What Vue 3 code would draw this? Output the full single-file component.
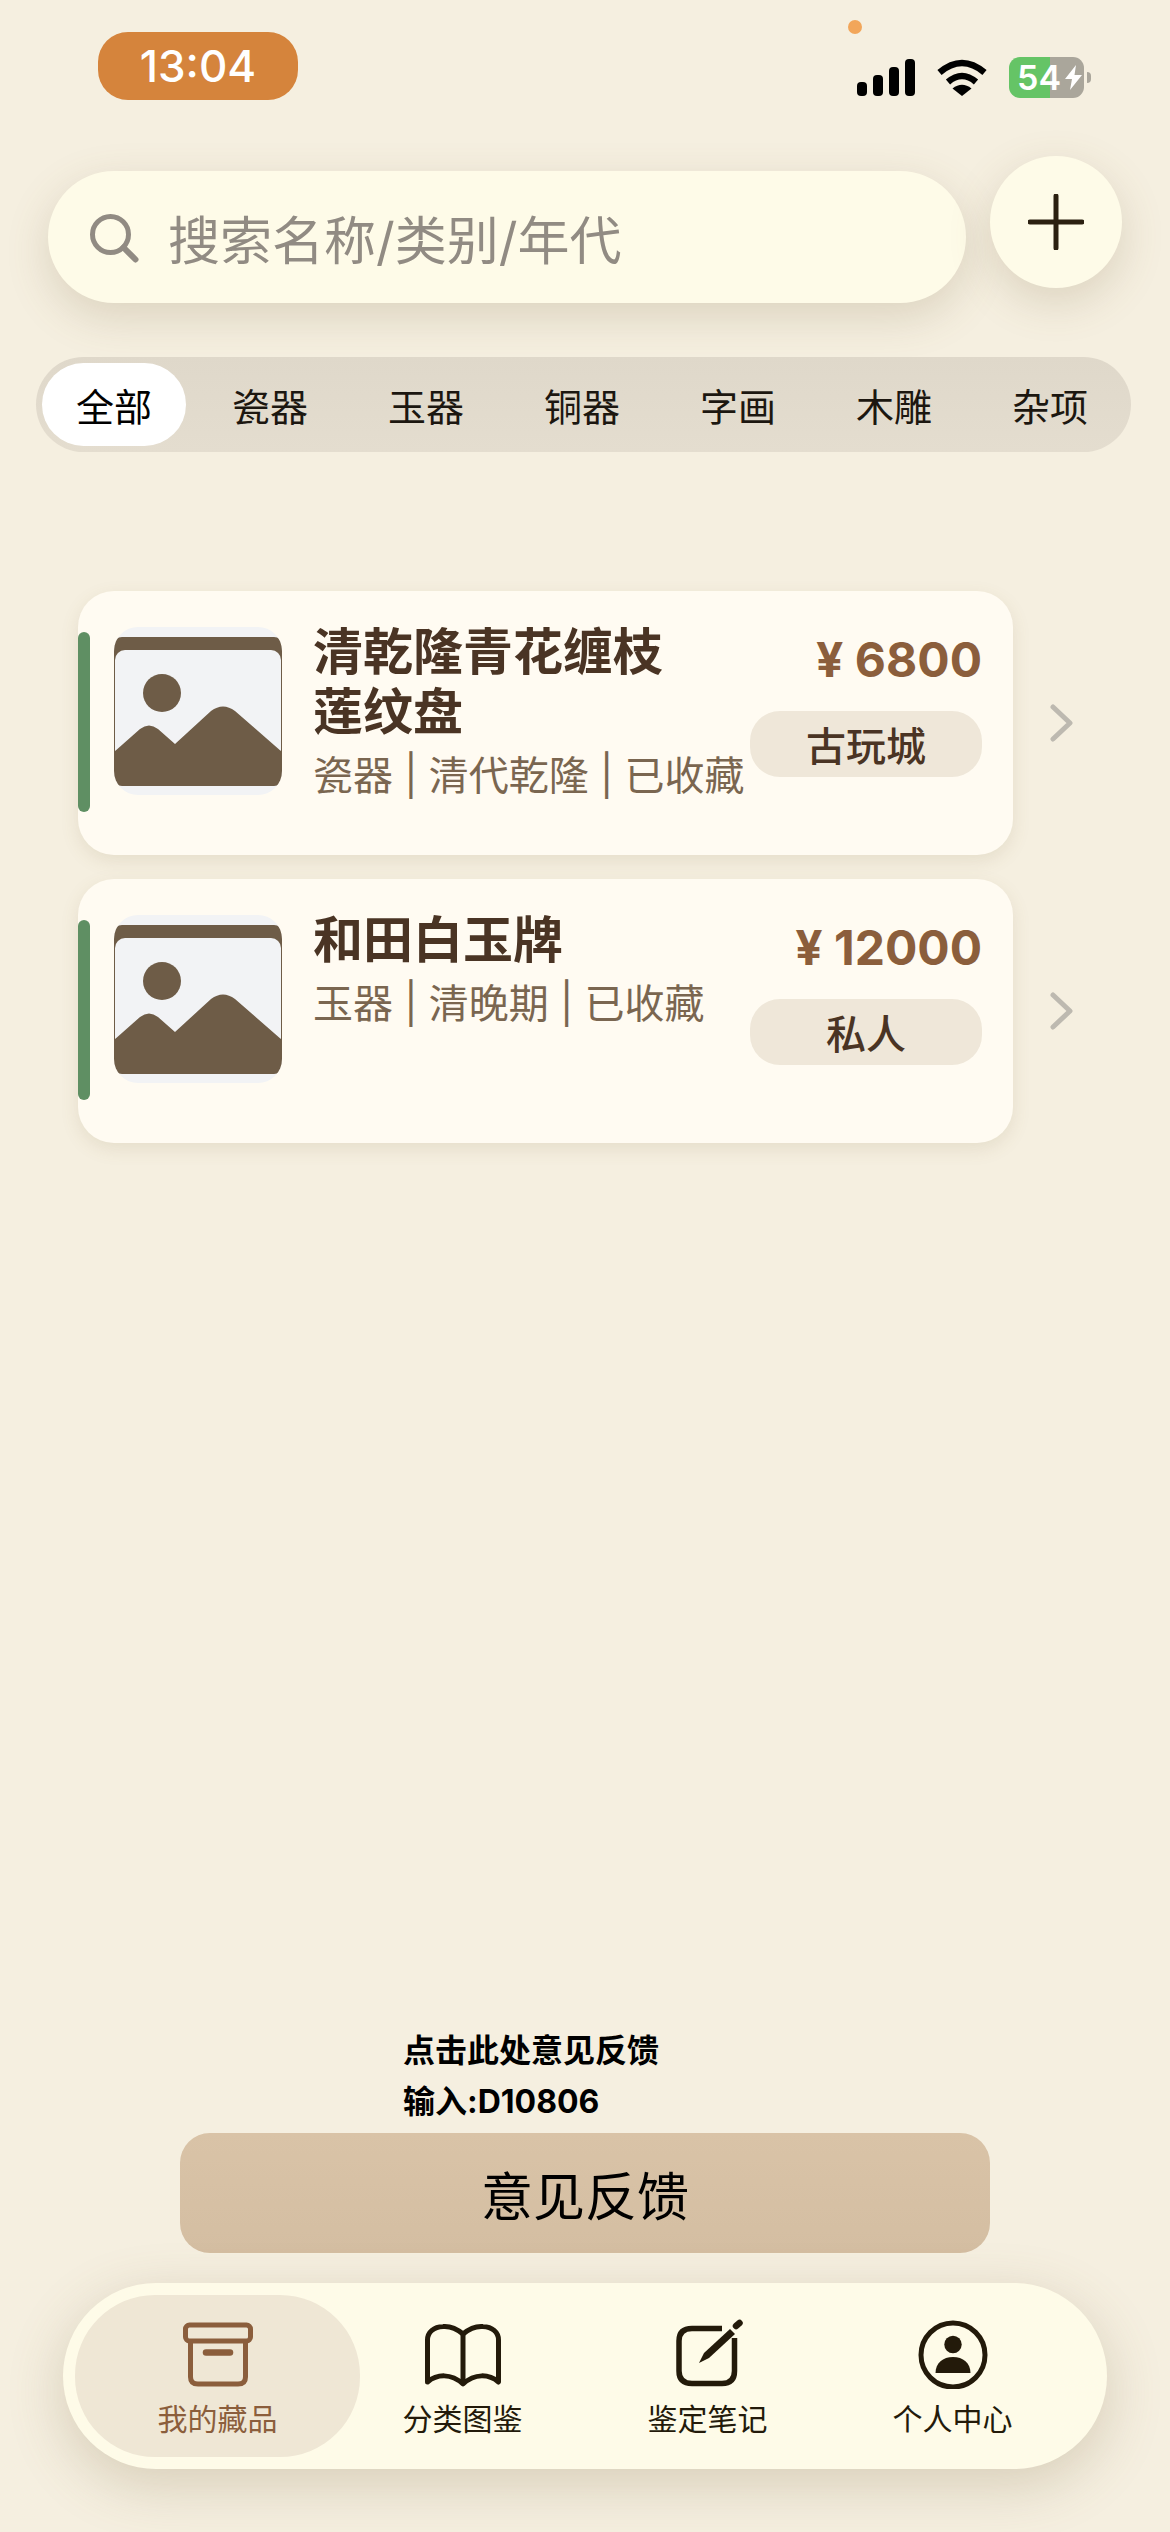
<template>
  <div class="page">
    <div class="status">
      <div class="time">13:04</div>
      <span class="mic-dot"></span>
      <div class="status-icons">
        <div class="signal">
          <span v-for="h in signalBars" :key="h" :style="{ height: h + 'px' }"></span>
        </div>
        <svg class="wifi" width="50" height="37" viewBox="0 0 50 37">
          <path d="M2.5 13.5 Q25 -5.5 47.5 13.5" fill="none" stroke="#000" stroke-width="6.5" />
          <path d="M11 23 Q25 11 39 23" fill="none" stroke="#000" stroke-width="6.5" />
          <path d="M25 37 L15.5 29.5 Q25 22 34.5 29.5 Z" fill="#000" />
        </svg>
        <div class="battery">
          <span>54</span>
          <svg width="17" height="25" viewBox="0 0 17 25">
            <path d="M11 0 L0 14 H7 L5 25 L17 10 H9.5 Z" fill="#fff" />
          </svg>
        </div>
      </div>
    </div>

    <div class="search-row">
      <div class="search">
        <svg width="52" height="52" viewBox="0 0 52 52">
          <circle cx="20.5" cy="20.5" r="18" fill="none" stroke="#918b83" stroke-width="5" />
          <path d="M33.5 33.5 L45.5 45.5" stroke="#918b83" stroke-width="6" stroke-linecap="round" />
        </svg>
        <span>搜索名称/类别/年代</span>
      </div>
      <div class="add-btn">
        <svg width="56" height="56" viewBox="0 0 56 56">
          <path d="M28 2 V54 M2 28 H54" stroke="#2b2010" stroke-width="5" stroke-linecap="round" />
        </svg>
      </div>
    </div>

    <div class="tabs">
      <div
        v-for="(t, i) in categories"
        :key="t"
        :class="['tab', { active: i === 0 }]"
      >{{ t }}</div>
    </div>

    <div class="list">
      <div v-for="item in items" :key="item.name" class="row">
        <div class="card">
          <span class="stripe"></span>
          <div class="thumb">
            <svg width="168" height="168" viewBox="0 0 168 168">
              <rect x="0" y="10" width="168" height="149" rx="8" fill="#6e5c47" />
              <rect x="1" y="23" width="166" height="110" rx="10" fill="#f2f3f5" />
              <circle cx="48" cy="66" r="19" fill="#6e5c47" />
              <path d="M0 125 L26 102 Q35 95 44 102 L61 117 L97 84 Q109 75 121 84 L168 125 V140 H0 Z" fill="#6e5c47" />
            </svg>
          </div>
          <div class="info">
            <div class="name">{{ item.name }}</div>
            <div class="meta">{{ item.meta }}</div>
          </div>
          <div class="side">
            <div class="price">¥ {{ item.price }}</div>
            <div class="tag">{{ item.source }}</div>
          </div>
        </div>
        <svg class="chevron" width="24" height="38" viewBox="0 0 24 38">
          <path d="M3 3 L20 19 L3 35" fill="none" stroke="#bdb9b0" stroke-width="5" stroke-linecap="round" stroke-linejoin="round" />
        </svg>
      </div>
    </div>

    <div class="footer">
      <div class="note">点击此处意见反馈输入:D10806</div>
      <div class="feedback">意见反馈</div>
      <div class="tabbar">
        <div class="nav-item active">
          <svg width="80" height="70" viewBox="0 0 80 70" fill="none" stroke="#8b5e3c" stroke-width="5">
            <rect x="7.5" y="6" width="65" height="16" rx="4" />
            <path d="M12.5 22 V58 Q12.5 65 20 65 H60 Q67.5 65 67.5 58 V22" />
            <path d="M28 33.5 H52" stroke-width="6.5" stroke-linecap="round" />
          </svg>
          <span>我的藏品</span>
        </div>
        <div class="nav-item">
          <svg width="80" height="70" viewBox="0 0 80 70" fill="none" stroke="#231a0a" stroke-width="5" stroke-linejoin="round">
            <path d="M40 15 C33 9 26 7 20 7.5 C11 8 4.5 13 4.5 21 V63 C14 55 28 54 40 65 C52 54 66 55 75.5 63 V21 C75.5 13 69 8 60 7.5 C54 7 47 9 40 15 Z" />
            <path d="M40 15 V65" />
          </svg>
          <span>分类图鉴</span>
        </div>
        <div class="nav-item">
          <svg width="80" height="70" viewBox="0 0 80 70" fill="none" stroke="#231a0a" stroke-width="5.5">
            <path d="M54 9.5 H24 Q11 9.5 11 22 V52 Q11 64.5 24 64.5 H54 Q66.5 64.5 66.5 52 V19" />
            <path d="M31 44 L36 34 L62 10 L67 15 L41 39 Z" fill="#231a0a" stroke="none" />
            <path d="M68 7 L71.5 4" stroke-width="6.5" stroke-linecap="round" />
          </svg>
          <span>鉴定笔记</span>
        </div>
        <div class="nav-item">
          <svg width="80" height="70" viewBox="0 0 80 70" fill="none">
            <circle cx="40" cy="36" r="32" stroke="#231a0a" stroke-width="5" />
            <circle cx="40" cy="25.5" r="8.7" fill="#231a0a" />
            <path d="M22.5 54 C22.5 44 30 38 40 38 S57.5 44 57.5 54 Z" fill="#231a0a" />
          </svg>
          <span>个人中心</span>
        </div>
      </div>
    </div>
  </div>
</template>

<script setup>
const signalBars = [14, 21, 29, 37]

const categories = ['全部', '瓷器', '玉器', '铜器', '字画', '木雕', '杂项']

const items = [
  { name: '清乾隆青花缠枝莲纹盘', meta: '瓷器 | 清代乾隆 | 已收藏', price: '6800', source: '古玩城' },
  { name: '和田白玉牌', meta: '玉器 | 清晚期 | 已收藏', price: '12000', source: '私人' },
]
</script>

<style>
html, body { margin: 0; background: #f5efe0; }
</style>

<style scoped>
.page {
  width: 1170px; height: 2532px; overflow: hidden;
  display: flex; flex-direction: column;
  background: #f5efe0;
  font-family: Inter, "Noto Sans CJK SC", sans-serif;
}

/* status bar */
.status {
  position: relative; height: 156px; box-sizing: border-box;
  display: flex; justify-content: space-between; align-items: flex-start;
  padding: 32px 79px 0 98px;
}
.time {
  width: 200px; height: 68px; border-radius: 30px;
  display: flex; align-items: center; justify-content: center;
  background: #d5843c; color: #fff;
  font-size: 44px; font-weight: 500;
}
.mic-dot {
  position: absolute; left: 848px; top: 20px;
  width: 14px; height: 14px; border-radius: 50%;
  background: #f2a65a;
}
.status-icons { display: flex; align-items: flex-start; gap: 22px; margin-top: 25px; }
.signal { display: flex; align-items: flex-end; gap: 6px; height: 37px; margin-top: 2px; }
.signal span { width: 10px; border-radius: 4px; background: #000; }
.wifi { margin-top: 2px; }
.battery {
  position: relative; width: 75px; height: 41px; border-radius: 11px;
  display: flex; align-items: center; gap: 4px; box-sizing: border-box;
  padding-left: 8px; margin-right: 7px;
  background: linear-gradient(90deg, #65c466 0 41px, #aaa69b 41px);
  color: #fff; font-size: 34px; font-weight: 600;
}
.battery::after {
  content: ''; position: absolute; left: 78px; top: 15px;
  width: 4px; height: 11px; border-radius: 0 6px 6px 0;
  background: #aaa69b;
}

/* search */
.search-row { display: flex; align-items: flex-start; gap: 24px; padding-left: 48px; }
.search {
  width: 918px; height: 132px; margin-top: 15px; box-sizing: border-box;
  display: flex; align-items: center; gap: 26px; padding-left: 42px;
  border-radius: 66px; background: #fefbe8;
  box-shadow: 0 14px 44px rgba(120, 100, 60, .2);
  color: #918b83; font-size: 52px;
}
.search svg { margin-top: 6px; }
.add-btn {
  width: 132px; height: 132px; border-radius: 50%;
  display: flex; align-items: center; justify-content: center;
  background: #fefbe8;
  box-shadow: 0 14px 44px rgba(120, 100, 60, .2);
}

/* category tabs */
.tabs {
  display: flex; gap: 12px; box-sizing: border-box;
  width: 1095px; height: 95px; margin: 54px 0 0 36px; padding: 6px;
  border-radius: 48px; overflow: hidden;
  background: linear-gradient(180deg, #dfd8ca, #e4ddcf);
}
.tab {
  flex: 0 0 144px; height: 83px; border-radius: 42px;
  display: flex; align-items: center; justify-content: center;
  font-size: 38px; color: #1c1710;
}
.tab.active { background: #fff; color: #000; }

/* collection list */
.list { display: flex; flex-direction: column; gap: 24px; margin: 139px 0 0 78px; }
.row { display: flex; align-items: center; gap: 37px; }
.card {
  position: relative; width: 935px; height: 264px; box-sizing: border-box;
  display: flex; align-items: flex-start; padding: 36px 31px 0 36px;
  border-radius: 36px; background: #fffbf2;
  box-shadow: 0 6px 18px rgba(130, 105, 60, .13);
}
.stripe {
  position: absolute; left: 0; top: 41px;
  width: 12px; height: 180px; border-radius: 6px;
  background: #5f8f63;
}
.thumb {
  flex: none; width: 168px; height: 168px; border-radius: 24px; overflow: hidden;
  background: #f2f3f5;
}
.thumb svg { display: block; }
.info { flex: 1; min-width: 0; margin: -5px 0 0 31px; }
.name {
  max-width: 390px; line-height: 60px;
  font-size: 50px; font-weight: 600; color: #4a3424;
}
.meta {
  margin-top: 8px; line-height: 52px; white-space: nowrap;
  font-size: 40px; color: #7a6650;
}
.side { flex: none; display: flex; flex-direction: column; align-items: flex-end; }
.price {
  height: 66px; line-height: 66px;
  font-size: 48px; font-weight: 700; color: #8b5e3c;
}
.tag {
  width: 232px; height: 66px; margin-top: 18px; border-radius: 30px;
  display: flex; align-items: center; justify-content: center;
  background: #efe7d9; color: #4a3424;
  font-size: 40px; font-weight: 500;
}

/* feedback + bottom navigation */
.footer { margin-top: auto; padding-bottom: 63px; }
.note {
  width: 262px; margin-left: 403px;
  line-height: 51px; font-size: 32px; font-weight: 700; color: #000;
}
.feedback {
  width: 810px; height: 120px; margin: 6px 0 0 180px; border-radius: 30px;
  display: flex; align-items: center; justify-content: center;
  background: linear-gradient(180deg, #d9c3a7, #d4bea2);
  color: #000; font-size: 52px;
}
.tabbar {
  display: grid; grid-template-columns: repeat(4, 1fr);
  width: 1044px; height: 186px; margin: 30px 0 0 63px;
  padding: 12px 32px; box-sizing: border-box;
  border-radius: 93px; background: #fefbe8;
  box-shadow: 0 16px 56px rgba(120, 100, 60, .24);
}
.nav-item {
  display: flex; flex-direction: column; align-items: center; gap: 10px;
  padding-top: 24px; box-sizing: border-box;
  color: #231a0a; font-size: 30px; line-height: 40px;
}
.nav-item.active {
  margin: 0 -20px; border-radius: 80px;
  background: #efe7d5; color: #8b5e3c;
}
</style>
